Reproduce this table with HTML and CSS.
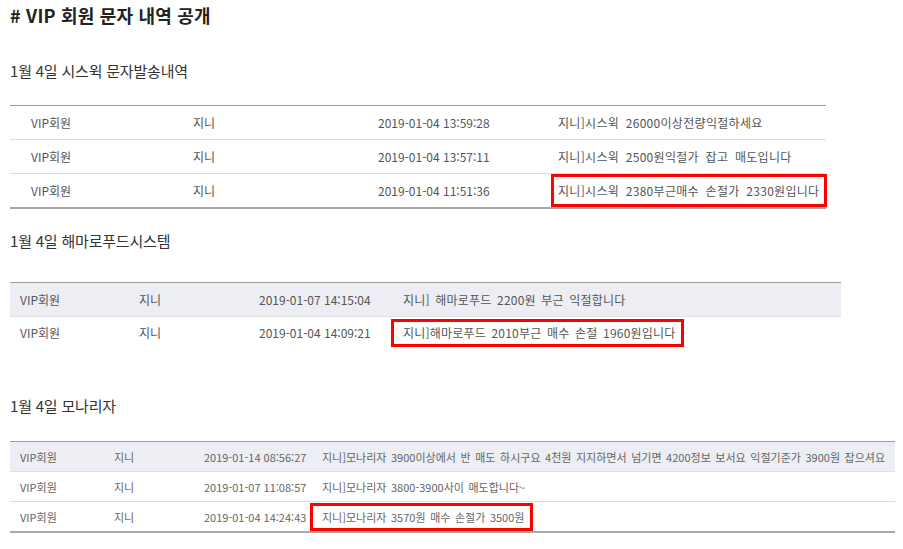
FILE: index.html
```html
<!DOCTYPE html>
<html lang="ko">
<head>
<meta charset="utf-8">
<link rel="stylesheet" href="styles.css">
</head>
<body>
<div class="page">
  <h1 class="title"># VIP 회원 문자 내역 공개</h1>

  <h2 class="sec sec1">1월 4일 시스윅 문자발송내역</h2>
  <table class="t t1">
    <colgroup><col class="c1"><col class="c2"><col class="c3"><col></colgroup>
    <tr><td>VIP회원</td><td>지니</td><td>2019-01-04 13:59:28</td><td class="msg">지니]시스윅 26000이상전량익절하세요</td></tr>
    <tr><td>VIP회원</td><td>지니</td><td>2019-01-04 13:57:11</td><td class="msg">지니]시스윅 2500원익절가 잡고 매도입니다</td></tr>
    <tr class="last"><td>VIP회원</td><td>지니</td><td>2019-01-04 11:51:36</td><td class="msg"><span class="mark">지니]시스윅 2380부근매수 손절가 2330원입니다</span></td></tr>
  </table>

  <h2 class="sec sec2">1월 4일 해마로푸드시스템</h2>
  <table class="t t2">
    <colgroup><col class="c1"><col class="c2"><col class="c3"><col></colgroup>
    <tr class="shade"><td>VIP회원</td><td>지니</td><td>2019-01-07 14:15:04</td><td class="msg">지니] 해마로푸드 2200원 부근 익절합니다</td></tr>
    <tr class="last"><td>VIP회원</td><td>지니</td><td>2019-01-04 14:09:21</td><td class="msg"><span class="mark">지니]해마로푸드 2010부근 매수 손절 1960원입니다</span></td></tr>
  </table>

  <h2 class="sec sec3">1월 4일 모나리자</h2>
  <table class="t t3">
    <colgroup><col class="c1"><col class="c2"><col class="c3"><col></colgroup>
    <tr class="shade"><td>VIP회원</td><td>지니</td><td>2019-01-14 08:56:27</td><td class="msg">지니]모나리자 3900이상에서 반 매도 하시구요 4천원 지지하면서 넘기면 4200정보 보서요 익절기준가 3900원 잡으셔요</td></tr>
    <tr><td>VIP회원</td><td>지니</td><td>2019-01-07 11:08:57</td><td class="msg">지니]모나리자 3800-3900사이 매도합니다~</td></tr>
    <tr class="last"><td>VIP회원</td><td>지니</td><td>2019-01-04 14:24:43</td><td class="msg"><span class="mark">지니]모나리자 3570원 매수 손절가 3500원</span></td></tr>
  </table>
</div>
</body>
</html>
```

FILE: styles.css
```css
html, body {
  margin: 0;
  padding: 0;
  background: #fff;
}

.page {
  padding: 0 0 0 10px;
  font-family: "Noto Sans CJK KR", "Noto Sans", sans-serif;
  color: #333;
}

.title {
  margin: 3px 0 0 0;
  font-size: 18px;
  line-height: 24px;
  font-weight: bold;
  color: #222;
  letter-spacing: 0.2px;
}

.sec {
  margin: 0;
  font-size: 15px;
  line-height: 20px;
  font-weight: normal;
  color: #333;
  letter-spacing: -0.2px;
}

.sec1 { margin-top: 34px; margin-bottom: 24px; }
.sec2 { margin-top: 22px; margin-bottom: 31px; }
.sec3 { margin-top: 48px; margin-bottom: 25px; }

.t {
  border-collapse: collapse;
  border-top: 1px solid #9d9d9d;
  font-size: 12px;
  color: #555;
  table-layout: fixed;
}

.t td {
  padding: 0 0 0 10px;
  white-space: nowrap;
  vertical-align: middle;
}

.t tr {
  border-bottom: 1px solid #dedede;
}

.t tr.shade {
  background: #eceef3;
}

.mark {
  display: inline-block;
  border: 3px solid #f00;
  line-height: 25px;
}

/* table 1 */
.t1 { width: 816px; }
.t1 td { height: 33px; padding-left: 21px; }
.t1 .c1 { width: 162px; }
.t1 .c2 { width: 185px; }
.t1 .c3 { width: 180px; }
.t1 .msg { letter-spacing: 0.3px; word-spacing: 3px; }
.t1 tr.last { border-bottom: 2px solid #a8a8a8; }
.t1 tr.last td { height: 33px; }
.t1 .mark { margin-left: -7px; padding: 0 5px 0 4px; line-height: 27px; }

/* table 2 */
.t2 { width: 831px; }
.t2 td { height: 33px; }
.t2 .c1 { width: 119px; }
.t2 .c2 { width: 120px; }
.t2 .c3 { width: 134px; }
.t2 td:last-child { padding-left: 20px; }
.t2 .msg { letter-spacing: 0.2px; word-spacing: 2px; }
.t2 tr.last { border-bottom: none; }
.t2 tr.last td { height: 31px; }
.t2 .mark { margin-left: -12px; padding: 0 6px 0 9px; line-height: 22px; }

/* table 3 */
.t3 { width: 885px; font-size: 11px; color: #666; }
.t3 td { height: 29px; }
.t3 .c1 { width: 94px; }
.t3 .c2 { width: 90px; }
.t3 .c3 { width: 108px; }
.t3 td:last-child { padding-left: 20px; }
.t3 .msg { word-spacing: 1.5px; }
.t3 tr.last { border-bottom: 2px solid #a8a8a8; }
.t3 .mark { margin-left: -12px; padding: 0 6px 0 9px; line-height: 22px; }
```
